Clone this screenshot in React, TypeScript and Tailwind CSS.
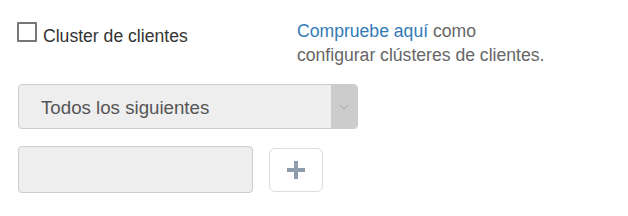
import React from "react";

export default function App() {
  return (
    <div className="w-[628px] h-[216px] bg-white font-['Liberation_Sans',Arial,sans-serif]">
      <div className="pl-[17px] pt-[19px]">
        <div className="flex items-start">
          <label className="w-[280px] flex items-start pt-[3px] gap-[6px] text-[17.6px] text-[#333] leading-[20px]">
            <span className="w-[20px] h-[20px] border-2 border-[#777] rounded-[1px] bg-white shrink-0"></span>
            <span className="pt-[4px]">Cluster de clientes</span>
          </label>
          <p className="text-[17.6px] leading-[24px] text-[#666]">
            <span className="text-[#337ab7]">Compruebe aquí</span> como
            <br />
            configurar clústeres de clientes.
          </p>
        </div>
        <div className="mt-[17px] ml-[1px] w-[340px] h-[45px] flex border border-[#cccccc] rounded-[4px] bg-[#eeeeee] overflow-hidden">
          <div className="flex-1 flex items-center pl-[22px] pt-[3px] text-[18.7px] text-[#555]">
            Todos los siguientes
          </div>
          <div className="w-[26px] bg-[#cccccc] flex items-center justify-center">
            <svg width="10" height="6" viewBox="0 0 10 6" fill="none">
              <path d="M1 1l4 4 4-4" stroke="#aaaaaa" strokeWidth="1" />
            </svg>
          </div>
        </div>
        <div className="mt-[17px] ml-[1px] flex items-center gap-[16px]">
          <div className="w-[235px] h-[47px] border border-[#cccccc] rounded-[4px] bg-[#eeeeee]"></div>
          <button className="w-[54px] h-[44px] border border-[#dddddd] rounded-[6px] bg-white flex items-center justify-center">
            <svg width="18" height="18" viewBox="0 0 18 18">
              <rect x="0" y="7" width="18" height="4" fill="#8e9cab" />
              <rect x="7" y="0" width="4" height="18" fill="#8e9cab" />
            </svg>
          </button>
        </div>
      </div>
    </div>
  );
}
